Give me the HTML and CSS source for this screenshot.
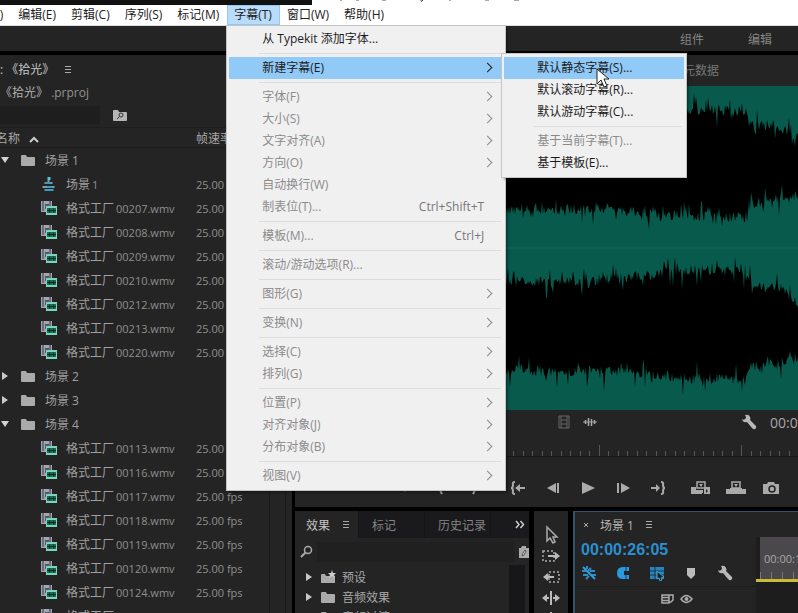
FILE: index.html
```html
<!DOCTYPE html>
<html lang="zh-CN">
<head>
<meta charset="utf-8">
<title>《拾光》.prproj</title>
<link rel="stylesheet" href="styles.css">
</head>
<body>
<svg width="0" height="0" class="defs" aria-hidden="true">
  <symbol id="folder" viewBox="0 0 16 12"><path d="M1 2q0-1 1-1h4l1 2h7q1 0 1 1v7q0 1-1 1H2q-1 0-1-1z" fill="#aaa"/></symbol>
  <symbol id="clip" viewBox="0 0 17 16"><path d="M1 1h11v7H8v4H1z" fill="#a5a5b2"/><path d="M3 1v10M10 1v6" stroke="#353541"/><path d="M5 4h4v5H5z" fill="#55556d"/><path d="M6 6h11v9H6z" fill="#7bd6b7"/><path d="M7 8h9v5H7z" fill="#1b6f59"/><path d="M7 10.500h9M9.500 8.500v4M13.500 8.500v4" stroke="#062d24"/></symbol>
  <symbol id="seq" viewBox="0 0 14 16"><path d="M6 1h3v3H6z" fill="#4fc6d5"/><path d="M7 4v3M3 7h8M1 11h12" stroke="#8698a5" stroke-width="2"/><path d="M4 6h5v2H4zM6 10h5v2H6zM3 13h9v2H3z" fill="#369eba"/></symbol>
  <symbol id="wrench" viewBox="0 0 16 16"><path d="M1 5q2 2 4-1Q5 2 4 1q4-1 5 2 1 2 0 3l6 6q1 2-1 3-1 1-3-1L6 8Q2 9 1 5" fill="#b8b8b8"/></symbol>
  <symbol id="lines" viewBox="0 0 8 9"><path d="M1 1.500h6M1 4.500h6M1 7.500h6" stroke="#aaa"/></symbol>
</svg>

<div class="app">
  <div class="strip"><div class="strip-dark"></div>
    <svg width="220" height="3" viewBox="0 0 220 3"><path d="M28 0h2M44 0h3M70 0h4M108 0h3l-2 2M137 0h2M173 0h4M202 0h5" stroke="#555" fill="none"/></svg>
  </div>

  <nav class="menubar">
    <button class="top-item">文件(F)</button>
    <button class="top-item">编辑(E)</button>
    <button class="top-item">剪辑(C)</button>
    <button class="top-item">序列(S)</button>
    <button class="top-item">标记(M)</button>
    <div class="open-item">
      <button class="top-item current">字幕(T)</button>
      <div class="menu main-menu">
        <button>从 Typekit 添加字体...</button>
        <hr>
        <div class="has-sub">
          <button class="hot more">新建字幕(E)</button>
          <div class="menu sub-menu">
            <button class="hot">默认静态字幕(S)...</button>
            <button>默认滚动字幕(R)...</button>
            <button>默认游动字幕(C)...</button>
            <hr>
            <button disabled>基于当前字幕(T)...</button>
            <button>基于模板(E)...</button>
            <svg class="cursor" width="14" height="20" viewBox="0 0 14 20"><path d="M1 1v15l4-4 3 7 3-1-3-7h5z" fill="#fff" stroke="#222"/></svg>
          </div>
        </div>
        <hr>
        <button class="more" disabled>字体(F)</button>
        <button class="more" disabled>大小(S)</button>
        <button class="more" disabled>文字对齐(A)</button>
        <button class="more" disabled>方向(O)</button>
        <button disabled>自动换行(W)</button>
        <button disabled>制表位(T)...<kbd>Ctrl+Shift+T</kbd></button>
        <hr>
        <button disabled>模板(M)...<kbd>Ctrl+J</kbd></button>
        <hr>
        <button disabled>滚动/游动选项(R)...</button>
        <hr>
        <button class="more" disabled>图形(G)</button>
        <hr>
        <button class="more" disabled>变换(N)</button>
        <hr>
        <button class="more" disabled>选择(C)</button>
        <button class="more" disabled>排列(G)</button>
        <hr>
        <button class="more" disabled>位置(P)</button>
        <button class="more" disabled>对齐对象(J)</button>
        <button class="more" disabled>分布对象(B)</button>
        <hr>
        <button class="more" disabled>视图(V)</button>
      </div>
    </div>
    <button class="top-item">窗口(W)</button>
    <button class="top-item">帮助(H)</button>
  </nav>

  <div class="workspaces"><button>组件</button><button>编辑</button></div>

  <main class="panels">
    <section class="project">
      <div class="project-title"><span>: 《拾光》</span><svg width="8" height="9"><use href="#lines"/></svg></div>
      <div class="project-file">《拾光》 <span>.prproj</span></div>
      <div class="project-search">
        <input type="text" aria-label="搜索">
        <svg width="16" height="13" viewBox="0 0 16 13"><path d="M1 2q0-1 1-1h4l1 2h7q1 0 1 1v7q0 1-1 1H2q-1 0-1-1z" fill="#b5b5b5"/><circle cx="9" cy="6" r="2" fill="none" stroke="#333"/><path d="M7.500 7.500L5 10" stroke="#333"/></svg>
      </div>
      <table class="bin">
        <thead><tr><th class="name-col">名称 <svg width="10" height="7" viewBox="0 0 10 7"><path d="M1 6l4-4 4 4" fill="none" stroke="#ccc" stroke-width="2"/></svg></th><th>帧速率</th></tr></thead>
        <tbody id="bin-rows"></tbody>
      </table>
      <div class="bin-scroll"></div>
    </section>

    <div class="right">
      <section class="monitor">
        <div class="monitor-tabs"><button>元数据</button></div>
        <svg id="wave" class="wave" viewBox="295 86 503 324" preserveAspectRatio="none"></svg>
        <div class="monitor-status">
          <svg width="12" height="14" viewBox="0 0 12 14"><path d="M1 1h10v12H1zM3 1v12M9 1v12M3 5h6M3 9h6" fill="none" stroke="#666"/></svg>
          <svg width="14" height="12" viewBox="0 0 14 12"><path d="M0 6h14" stroke="#999"/><path d="M2.500 4v4M5.500 2v8M8.500 3v7M11.500 4v4" stroke="#aaa" stroke-width="1.500"/></svg>
          <svg class="status-wrench" width="16" height="16"><use href="#wrench"/></svg>
          <span class="status-time">00:00:00</span>
        </div>
        <svg id="ticks" class="ticks" viewBox="295 434 503 26" preserveAspectRatio="none"></svg>
        <div class="transport">
          <button aria-label="标记"><svg viewBox="0 0 20 16"><path d="M7 3h6v5l-3 4-3-4z"/></svg></button>
          <button aria-label="入点"><svg viewBox="0 0 20 16"><path d="M12 2L9 8l3 6" class="ln"/></svg></button>
          <button aria-label="出点"><svg viewBox="0 0 20 16"><path d="M8 2l3 6-3 6" class="ln"/></svg></button>
          <button class="group" aria-label="转到入点"><svg viewBox="0 0 20 16"><path d="M7 2Q4 2 5 5q0 3-2 3 2 0 2 3-1 3 2 3" class="ln"/><path d="M7 8l5-4v3h5v2h-5v3z"/></svg></button>
          <button aria-label="后退一帧"><svg viewBox="0 0 20 16"><path d="M13 3v10L4 8zM14 3h2v10h-2z"/></svg></button>
          <button aria-label="播放"><svg viewBox="0 0 20 16"><path d="M4 2l13 6-13 6z"/></svg></button>
          <button aria-label="前进一帧"><svg viewBox="0 0 20 16"><path d="M4 3h2v10H4zM8 3v10l9-5z"/></svg></button>
          <button aria-label="转到出点"><svg viewBox="0 0 20 16"><path d="M13 2q3 0 2 3 0 3 2 3-2 0-2 3 1 3-2 3" class="ln"/><path d="M12 8L8 4v3H3v2h5v3z"/></svg></button>
          <button class="group" aria-label="插入"><svg viewBox="0 0 20 16"><path d="M0 7h5v3h6v4H0zM13 7h6v7h-6z"/><path d="M6 2h8v6H6z" fill="#242424" stroke="#aaa" stroke-width="1.500"/><path d="M8 4h4l-2 3zM9 10h3v3H9z"/><path d="M15 9l2 2-2 2z" fill="#242424"/></svg></button>
          <button aria-label="覆盖"><svg viewBox="0 0 20 16"><path d="M0 9h20v5H0z"/><path d="M6 2h8v6H6z" fill="#242424" stroke="#aaa" stroke-width="1.500"/><path d="M8 4h4l-2 3zM4 8h12v2H4z"/></svg></button>
          <button aria-label="导出帧"><svg viewBox="0 0 20 16"><path d="M2 4h4l1-2h6l1 2h4v10H2z"/><circle cx="11" cy="9" r="3" fill="#aaa" stroke="#222" stroke-width="1.500"/></svg></button>
        </div>
      </section>

      <div class="lower">
        <section class="effects">
          <div class="tabs">
            <button class="tab on">效果 <svg width="8" height="9"><use href="#lines"/></svg></button>
            <button class="tab">标记</button>
            <button class="tab">历史记录</button>
            <button class="overflow" aria-label="更多"><svg width="10" height="9" viewBox="0 0 10 9"><path d="M1 1l3 3.500L1 8M5.500 1l3 3.500-3 3.500" fill="none" stroke="#ccc" stroke-width="1.500"/></svg></button>
          </div>
          <div class="fx-search">
            <svg width="13" height="13" viewBox="0 0 13 13"><circle cx="8" cy="5" r="3.500" fill="none" stroke="#aaa" stroke-width="1.500"/><path d="M5.500 7.500L1 12" stroke="#aaa" stroke-width="2"/></svg>
            <input type="text" aria-label="搜索效果">
            <svg width="11" height="14" viewBox="0 0 11 14"><path d="M1 3h2l1-2h4v2h3v10H1z" fill="#aaa"/><path d="M4 11l1-3 2-3 1 1-2 4z" fill="#ddd" stroke="#555"/></svg>
          </div>
          <div class="fx-body">
            <ul>
              <li><i class="arrow"></i><svg width="16" height="15" viewBox="0 0 16 15"><path d="M1 5q0-1 1-1h3l1 2h9v7H1z" fill="#aaa"/><path d="M12 0l1 3h3l-2 2 1 3-3-2-3 2 1-3-2-2h3z" fill="#ccc"/></svg><span>预设</span></li>
              <li><i class="arrow"></i><svg width="16" height="12"><use href="#folder"/></svg><span>音频效果</span></li>
              <li><i class="arrow"></i><svg width="16" height="12"><use href="#folder"/></svg><span>音频过渡</span></li>
            </ul>
            <div class="fx-scroll"></div>
          </div>
        </section>

        <section class="tools">
          <button aria-label="选择"><svg viewBox="0 0 20 20"><path d="M6 2v14l3-3 3 5 2-1-2-5h4z" fill="none" stroke="#aaa" stroke-width="1.500"/></svg></button>
          <button aria-label="向前选择轨道"><svg viewBox="0 0 20 20"><path d="M2 5h11v10H2z" fill="none" stroke="#aaa" stroke-width="1.500" stroke-dasharray="2 2"/><path d="M7 9h7V6l5 4-5 4v-3H7z" fill="#bbb"/></svg></button>
          <button aria-label="向后选择轨道"><svg viewBox="0 0 20 20"><path d="M8 5h10v10H8z" fill="none" stroke="#aaa" stroke-width="1.500" stroke-dasharray="2 2"/><path d="M13 9H7V6l-5 4 5 4v-3h6z" fill="#bbb"/></svg></button>
          <button aria-label="波纹编辑"><svg viewBox="0 0 20 20"><path d="M9 3h2v14H9zM1 10l5-4v3h2v2H6v3zM19 10l-5-4v3h-2v2h2v3z" fill="#bbb"/></svg></button>
          <button aria-label="滚动编辑"><svg viewBox="0 0 20 20"><path d="M9 3h2v14H9z" fill="#bbb"/></svg></button>
        </section>

        <section class="timeline">
          <div class="seq-tab"><button class="close" aria-label="关闭"><svg width="6" height="6" viewBox="0 0 6 6"><path d="M1 1l4 4M5 1L1 5" stroke="#aaa"/></svg></button><span>场景 1</span><svg width="8" height="9"><use href="#lines"/></svg></div>
          <div class="seq-main">
            <div class="seq-head">
              <div class="seq-time">00:00:26:05</div>
              <div class="seq-tools">
                <svg viewBox="0 0 16 16"><path d="M2 2l12 12" stroke="#35a0e0" stroke-width="2"/><path d="M1 6h5M9 6h5M2 10h5M11 10h4M6 1v3M10 3L7 6M5 14l3-3" stroke="#2b8dcc" stroke-width="2"/></svg>
                <svg viewBox="0 0 16 16"><path d="M14 2H8Q2 2 2 8t6 6h6v-4H9V6h5z" fill="#2b9ade"/><path d="M11 2v4M11 10v4" stroke="#203848"/></svg>
                <svg viewBox="0 0 16 16"><path d="M1 2h14v12H1z" fill="#2784bd"/><path d="M1 6h14M1 10h14M6 2v12" stroke="#18364a"/><path d="M8 6l7 6-3 1 1 2-2 1-1-3-2 1z" fill="#222" stroke="#43a8dd"/></svg>
                <svg viewBox="0 0 16 16"><path d="M4 3h8v7l-4 4-4-4z" fill="#bbb"/></svg>
                <svg viewBox="0 0 16 16"><use href="#wrench"/></svg>
              </div>
              <div class="track-tools">
                <svg width="13" height="10" viewBox="0 0 13 10"><path d="M1 1h7v8H1zM1 3.500h7M1 6.500h7M8 1h4v5l-2 2H8" fill="none" stroke="#aaa" stroke-width="1.500"/></svg>
                <svg width="13" height="10" viewBox="0 0 13 10"><path d="M1 5q5-7 11 0-6 7-11 0z" fill="none" stroke="#aaa" stroke-width="1.500"/><circle cx="6.500" cy="5" r="2" fill="#aaa"/></svg>
              </div>
            </div>
            <div class="seq-ruler">
              <div class="ruler-box"><span>00:00:15:00</span></div>
              <div class="work-bar"></div>
            </div>
          </div>
        </section>
      </div>
    </div>
  </main>
</div>
<script src="script.js"></script>
</body>
</html>
```
FILE: styles.css
```css
* { box-sizing: border-box; }
body { margin: 0; background: #000; font-family: "Open Sans", "Noto Sans CJK SC", sans-serif; font-size: 12px; color: #a8a8a8; }
button, input { font: inherit; color: inherit; background: none; border: 0; padding: 0; margin: 0; }
svg { display: block; flex: none; }
.defs { position: absolute; }
.app { height: 100vh; display: flex; flex-direction: column; overflow: hidden; }

.strip { flex: none; height: 5px; display: flex; background: #fff; }
.strip-dark { width: 312px; background: #111; }

.menubar { flex: none; height: 21px; display: flex; background: #fff; color: #222; margin-left: -41px; border-bottom: 1px solid #ddd; }
.top-item { height: 20px; padding: 0 8px 0 7px; line-height: 20px; white-space: nowrap; }
.current { background: #b9dcfa; outline: 1px solid #93c9f5; outline-offset: -1px; }
.open-item { position: relative; }

.menu { position: absolute; background: #f1f0f1; color: #1c1c1c; box-shadow: 0 0 0 1px #c4c4c4, 2px 2px 3px #0008; }
.main-menu { z-index: 5; top: 21px; left: 0; width: 278px; padding: 2px 2px 3px; }
.menu button { display: flex; align-items: center; width: 100%; height: 22px; padding: 0 19px 2px 33px; white-space: nowrap; position: relative; }
.menu button:disabled { color: #8b8b8b; }
.menu kbd { font: inherit; margin-left: auto; color: #777; }
.menu hr { height: 1px; border: 0; margin: 3px 2px 3px 30px; background: #dcdcdc; }
.menu .hot { background: #91c9f7; }
.more::after { content: ""; width: 6px; height: 6px; margin-left: auto; margin-right: -7px; border: solid currentColor; border-width: 1px 1px 0 0; transform: rotate(45deg); }
.has-sub { position: relative; }
.sub-menu { top: -3px; left: 273px; width: 184px; padding: 3px 2px; }
.cursor { position: absolute; left: 94px; top: 14px; }

.workspaces { flex: none; height: 25px; background: #242424; display: flex; justify-content: flex-end; align-items: center; gap: 44px; padding-right: 26px; color: #858585; }

.panels { flex: 1; min-height: 0; margin-top: 4px; display: flex; gap: 3px; }
.project { flex: none; width: 292px; background: #242424; position: relative; overflow: hidden; }
.project-title { height: 28px; display: flex; align-items: center; gap: 10px; color: #c4c4c4; }
.project-file { height: 20px; line-height: 20px; color: #b0b0b0; }
.project-file span { color: #929292; }
.project-search { height: 24px; display: flex; align-items: center; gap: 12px; }
.project-search input { width: 100px; height: 18px; background: #1e1e1e; }
.bin { border-collapse: collapse; table-layout: fixed; width: 100%; white-space: nowrap; }
.bin th { font-weight: 400; text-align: left; height: 20px; padding: 0; border-top: 1px solid #1d1d1d; border-bottom: 1px solid #1d1d1d; }
.name-col { width: 196px; }
.name-col svg { display: inline-block; margin-left: 6px; }
.bin th:first-child { position: relative; left: -4px; }
.bin td { height: 24px; padding: 0; color: #909090; font-size: 11px; }
.cell { display: flex; align-items: center; height: 24px; font-size: 12px; color: #a0a0a0; }
.cell small { font-size: 11px; margin-left: 2px; color: #909090; }
.cell svg { margin-right: 9px; }
.cell.nested { padding-left: 40px; }
.arrow { flex: none; width: 0; height: 0; border: solid transparent; border-width: 4px 0 4px 6px; border-left-color: #c8c8c8; }
.arrow.open { border-width: 6px 4px 0; border-color: #d2d2d2 transparent transparent; }
.cell .arrow { margin: 0 12px 0 2px; }
.cell .arrow.open { margin: 0 11px 0 1px; }
.bin-scroll { position: absolute; right: 6px; top: 94px; bottom: 0; width: 17px; border: solid #1b1b1b; border-width: 0 1px; }

.right { flex: 1; min-width: 0; display: flex; flex-direction: column; gap: 4px; }
.monitor { flex: 1; min-height: 0; background: #242424; display: flex; flex-direction: column; }
.monitor-tabs { height: 31px; display: flex; justify-content: flex-end; padding-right: 79px; color: #777; }
.monitor-tabs button { line-height: 28px; }
.wave { flex: 1; min-height: 0; width: 100%; background: #000; }
.monitor-status { height: 24px; display: flex; align-items: center; padding-left: 263px; gap: 13px; }
.status-wrench { margin-left: auto; }
.status-time { width: 28px; overflow: hidden; font-size: 14px; }
.ticks { height: 26px; width: 100%; }
.transport { height: 47px; padding: 8px 0 0 92px; display: flex; align-items: flex-start; }
.transport button { flex: none; width: 35px; height: 39px; display: flex; justify-content: center; padding-top: 12px; }
.transport svg { width: 20px; height: 16px; fill: #aaa; }
.transport .ln { fill: none; stroke: #aaa; stroke-width: 2; }
.transport .group { margin-left: 8px; }

.lower { flex: none; height: 102px; display: flex; gap: 5px; }
.effects { flex: none; width: 234px; background: #242424; display: flex; flex-direction: column; overflow: hidden; }
.tabs { flex: none; height: 27px; display: flex; background: #1a191c; }
.tab { width: 66px; color: #858585; border-right: 1px solid #151515; text-align: left; padding-left: 13px; }
.tab.on { width: 64px; background: #242424; color: #c4c4c4; padding-left: 11px; display: flex; align-items: center; gap: 12px; }
.overflow { margin-left: auto; margin-right: 4px; }
.fx-search { flex: none; height: 27px; display: flex; align-items: center; padding-left: 5px; gap: 4px; }
.fx-search input { flex: 1; min-width: 0; height: 20px; background: #202020; }
.fx-body { flex: 1; min-height: 0; display: flex; justify-content: space-between; padding-right: 4px; }
.fx-body ul { list-style: none; margin: 0; padding: 2px 0 0 11px; }
.fx-body li { height: 20px; display: flex; align-items: center; white-space: nowrap; }
.fx-body .arrow { margin-right: 8px; }
.fx-body span { margin-left: 6px; }
.fx-scroll { width: 16px; background: #171619; }

.tools { flex: none; width: 34px; background: #242424; display: flex; flex-direction: column; align-items: center; padding-top: 13px; overflow: hidden; }
.tools button { flex: none; height: 21px; }
.tools svg { width: 20px; height: 20px; }

.timeline { flex: 1; min-width: 0; background: #242424; border: solid #2d566e; border-width: 1px 0 0 2px; display: flex; flex-direction: column; overflow: hidden; }
.seq-tab { flex: none; height: 25px; display: flex; align-items: center; padding-left: 8px; color: #b5b5b5; }
.seq-tab span { margin: 0 11px; }
.seq-main { flex: 1; display: flex; min-height: 0; }
.seq-head { flex: none; width: 181px; }
.seq-time { height: 26px; padding-left: 6px; font: bold 16px/26px "Liberation Sans", sans-serif; color: #2b8fd0; }
.seq-tools { height: 24px; display: flex; gap: 18px; padding: 2px 0 0 6px; border-bottom: 1px solid #1c1c1c; }
.seq-tools svg { width: 16px; height: 16px; }
.track-tools { display: flex; gap: 6px; padding: 7px 0 0 86px; }
.seq-ruler { flex: 1; min-width: 0; background: #1d1d1d; display: flex; flex-direction: column; }
.ruler-box { height: 42px; margin-left: 4px; padding-left: 4px; background: repeating-linear-gradient(90deg, #777 0 1px, transparent 1px 11px) 0 100% / 100% 7px no-repeat, #4a484b; overflow: hidden; line-height: 44px; font-size: 11px; }
.work-bar { height: 3px; background: #c9bb32; }
```
FILE: script.js
```js
// Project bin: folders and the clips inside them
var files = function (list) {
  return list.map(function (n) { return { icon: 'clip', name: '格式工厂', rest: n + '.wmv' }; });
};
var rows = [{ folder: '场景 1', open: true }, { icon: 'seq', name: '场景', rest: '1' }]
  .concat(files(['00207', '00208', '00209', '00210', '00212', '00213', '00220']))
  .concat([{ folder: '场景 2' }, { folder: '场景 3' }, { folder: '场景 4', open: true }])
  .concat(files(['00113', '00116', '00117', '00118', '00119', '00120', '00124', '00131']));

document.getElementById('bin-rows').innerHTML = rows.map(function (r) {
  if (r.folder) {
    return '<tr><td><div class="cell"><i class="arrow' + (r.open ? ' open' : '') + '"></i>' +
      '<svg width="16" height="12"><use href="#folder"/></svg>' + r.folder + '</div></td><td></td></tr>';
  }
  return '<tr><td><div class="cell nested"><svg width="17" height="16"><use href="#' + r.icon + '"/></svg>' +
    r.name + ' <small>' + r.rest + '</small></div></td><td>25.00 fps</td></tr>';
}).join('');

// Waveform: envelopes as [x, y] stops, roughened with seeded noise
var seed = 7;
function rnd() { seed = (seed * 16807) % 2147483647; return seed / 2147483647; }
function at(stops, x) {
  for (var i = 1; i < stops.length; i++) {
    if (x <= stops[i][0]) {
      var a = stops[i - 1], b = stops[i];
      return a[1] + (b[1] - a[1]) * (x - a[0]) / (b[0] - a[0]);
    }
  }
  return stops[stops.length - 1][1];
}
function edge(stops) {
  var pts = [];
  for (var x = 295; x <= 798; x++) {
    var n = (rnd() - 0.5) * 11;
    if (rnd() < 0.22) n += (rnd() - 0.5) * 30;
    pts.push(x + ' ' + Math.round(at(stops, x) + n));
  }
  return pts;
}
var top1 = edge([[295, 112], [687, 110], [747, 110], [749, 125], [775, 125], [798, 137]]);
var top2 = edge([[295, 209], [600, 209], [690, 216], [745, 217], [750, 203], [798, 197]]);
var bot2 = edge([[295, 283], [570, 282], [640, 276], [690, 270], [747, 272], [751, 282], [785, 291], [798, 303]]);
var top3 = edge([[295, 370], [600, 371], [690, 378], [746, 379], [751, 367], [798, 358]]);
document.getElementById('wave').innerHTML =
  '<path fill="#075a4c" d="M295 86L' + top1.join('L') + 'L798 86z"/>' +
  '<path fill="#075a4c" d="M' + top2.concat(bot2.reverse()).join('L') + 'z"/>' +
  '<path fill="#075a4c" d="M295 410L' + top3.join('L') + 'L798 410z"/>' +
  '<path d="M295 248h503" stroke="#126557" fill="none"/>';

// Monitor time ruler
var d = '';
for (var i = -22; i < 31; i++) {
  var x = Math.round(513 + i * 9.5);
  d += 'M' + x + '.5 ' + ((i - 9) % 15 === 0 ? 445 : 451) + 'V456';
}
document.getElementById('ticks').innerHTML =
  '<path d="' + d + '" stroke="#555" fill="none"/><path d="M295 456.500h503" stroke="#171717"/>';
```
